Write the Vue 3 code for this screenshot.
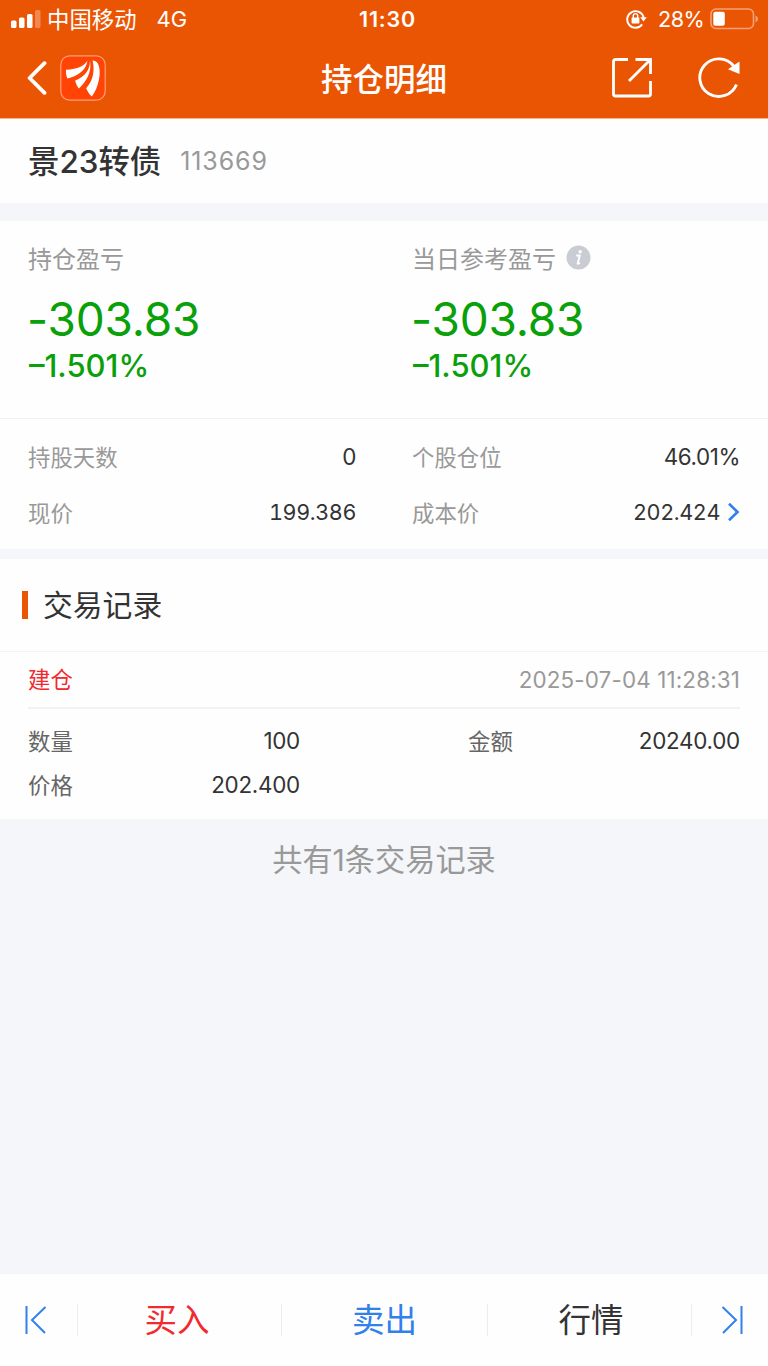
<template>
  <div class="page">
    <header class="header">
      <div class="status-bar">
        <div class="status-left">
          <svg class="signal" width="30" height="19" viewBox="0 0 30 19">
            <rect x="0" y="10.5" width="5.5" height="7.5" rx="1.6" fill="#fff" />
            <rect x="8" y="7.5" width="5.5" height="10.5" rx="1.6" fill="#fff" />
            <rect x="16" y="4" width="5.5" height="14" rx="1.6" fill="#fff" />
            <rect x="24" y="0" width="5.5" height="18" rx="1.6" fill="#fff" opacity="0.3" />
          </svg>
          <span class="carrier">中国移动</span>
          <span class="network">4G</span>
        </div>
        <span class="clock">11:30</span>
        <div class="status-right">
          <svg class="lock" width="21" height="20" viewBox="0 0 21 20">
            <path d="M16.2 15.4A8.3 8.3 0 1 1 17.6 8.6" fill="none" stroke="#fff" stroke-width="1.9" />
            <path d="M14.2 8.2h6.6l-3.3 4.4z" fill="#fff" />
            <rect x="5.6" y="8.6" width="7.8" height="6" rx="0.8" fill="#fff" />
            <path d="M7.3 9V6.8a2.2 2.2 0 0 1 4.4 0V9" fill="none" stroke="#fff" stroke-width="1.4" />
          </svg>
          <span class="percent">28%</span>
          <svg class="battery" width="49" height="22" viewBox="0 0 49 22">
            <rect x="1" y="1" width="42.5" height="19.5" rx="5" fill="none" stroke="#fff" stroke-width="1.6" opacity="0.45" />
            <rect x="3.3" y="3.8" width="11.5" height="14" rx="2" fill="#fff" />
            <path d="M45.5 7.5q2.5 1 2.5 3.4t-2.5 3.4z" fill="#fff" opacity="0.45" />
          </svg>
        </div>
      </div>

      <div class="nav-bar">
        <div class="nav-left">
          <svg class="back" width="20" height="34" viewBox="0 0 20 34">
            <path d="M17.5 2.2 2.6 17l14.9 14.8" fill="none" stroke="#fff" stroke-width="3.8" stroke-linecap="round" stroke-linejoin="round" />
          </svg>
          <svg class="logo" width="46" height="46" viewBox="0 0 46 46">
            <rect x="0.8" y="0.8" width="44.4" height="44.4" rx="9" fill="#ff4405" stroke="#ff9f78" stroke-width="1.2" />
            <path d="M27.5 5.5C24 11.5 18 14 6 14.8c-.3 3 .2 6 1.4 8.8C17 21 26 16 27.5 5.5z" fill="#fff" />
            <path d="M30 5.5C30 15 25 21.500 15.2 25.5c.6 3 1.9 5.6 3.7 8C26.5 26.5 32 17 30 5.5z" fill="#fff" />
            <path d="M32.6 5.5C35 16 33 26 26.2 33.2c1.3 3.2 3.1 6 5.6 8.4C38.5 33 42 17 38 8.8 36.6 6.5 34.8 5.6 32.6 5.5z" fill="#fff" />
          </svg>
        </div>
        <h1 class="title">持仓明细</h1>
        <div class="nav-right">
          <svg width="42" height="42" viewBox="0 0 42 42" fill="none" stroke="#fff" stroke-width="2.8">
            <path d="M17 2.5H4.5a2 2 0 0 0-2 2v32.5a2 2 0 0 0 2 2h33a2 2 0 0 0 2-2V24" />
            <path d="M24.5 2.5h15V17M38.5 3.5 18 24" />
          </svg>
          <svg width="44" height="42" viewBox="0 0 44 42">
            <path d="M39.5 27.5A19 18.8 0 1 1 36.7 9" fill="none" stroke="#fff" stroke-width="2.9" />
            <path d="M42.5 4.5v12.5L31 12.200z" fill="#fff" />
          </svg>
        </div>
      </div>
    </header>

    <section class="stock">
      <span class="stock-name">{{ stock.name }}</span>
      <span class="stock-code">{{ stock.code }}</span>
    </section>

    <section class="profit">
      <div v-for="item in profits" :key="item.label" class="profit-item">
        <div class="profit-label">
          {{ item.label }}
          <svg v-if="item.tip" class="info" width="25" height="25" viewBox="0 0 25 25">
            <circle cx="12.5" cy="12.5" r="12" fill="#c9ccd3" />
            <circle cx="14.2" cy="6.8" r="1.7" fill="#fff" />
            <path d="M10.2 10.6h3.5l-2 8q.8.3 2.3-.6" fill="none" stroke="#fff" stroke-width="2" />
          </svg>
        </div>
        <div class="profit-value">{{ item.value }}</div>
        <div class="profit-rate">{{ item.rate }}</div>
      </div>
    </section>

    <section class="detail">
      <div v-for="item in details" :key="item.label" class="detail-item">
        <span class="detail-label">{{ item.label }}</span>
        <span :class="['detail-value', { price: item.price }]">{{ item.value }}</span>
        <svg v-if="item.link" class="arrow" width="13" height="20" viewBox="0 0 13 20">
          <path d="M2 1.8 10.5 10 2 18.2" fill="none" stroke="#3280ea" stroke-width="2.6" />
        </svg>
      </div>
    </section>

    <section class="records">
      <h2 class="records-title">交易记录</h2>
      <div v-for="record in records" :key="record.time" class="record">
        <div class="record-head">
          <span class="record-type">{{ record.type }}</span>
          <span class="record-time">{{ record.time }}</span>
        </div>
        <div class="record-body">
          <div v-for="field in record.fields" :key="field.label" class="field">
            <span class="field-label">{{ field.label }}</span>
            <span class="field-value">{{ field.value }}</span>
          </div>
        </div>
      </div>
    </section>

    <p class="total">共有{{ records.length }}条交易记录</p>

    <footer class="footer">
      <div class="side">
        <svg width="22" height="30" viewBox="0 0 22 30">
          <path d="M1.5 1v28M20.5 2 7 15l13 13" fill="none" stroke="#3280ea" stroke-width="2" />
        </svg>
      </div>
      <div v-for="tab in tabs" :key="tab.text" :class="['tab', tab.type]">{{ tab.text }}</div>
      <div class="side right">
        <svg width="22" height="30" viewBox="0 0 22 30">
          <path d="M20.5 1v28M1.5 2 15 15 2 28" fill="none" stroke="#3280ea" stroke-width="2" />
        </svg>
      </div>
    </footer>
  </div>
</template>

<script setup>
import { ref } from "vue";

const stock = ref({ name: "景23转债", code: "113669" });

// 盈亏
const profits = ref([
  { label: "持仓盈亏", value: "-303.83", rate: "–1.501%" },
  { label: "当日参考盈亏", value: "-303.83", rate: "–1.501%", tip: true },
]);

// 持仓信息
const details = ref([
  { label: "持股天数", value: "0" },
  { label: "个股仓位", value: "46.01%" },
  { label: "现价", value: "199.386", price: true },
  { label: "成本价", value: "202.424", price: true, link: true },
]);

// 交易记录
const records = ref([
  {
    type: "建仓",
    time: "2025-07-04 11:28:31",
    fields: [
      { label: "数量", value: "100" },
      { label: "金额", value: "20240.00" },
      { label: "价格", value: "202.400" },
    ],
  },
]);

const tabs = [
  { text: "买入", type: "buy" },
  { text: "卖出", type: "sell" },
  { text: "行情", type: "quote" },
];
</script>

<style>
body {
  margin: 0;
  background-color: #f4f6f9;
}
</style>

<style scoped>
.page {
  display: flex;
  flex-direction: column;
  width: 768px;
  height: 1366px;
  overflow: hidden;
  background-color: #f4f6f9;
  color: #333;
  font-family: Inter, "Noto Sans CJK SC", sans-serif;
  white-space: nowrap;
}

svg {
  display: block;
  flex: none;
}

/* 顶部 */
.header {
  height: 118px;
  background-color: #ea5504;
  border-bottom: 1px solid #f6b48f;
  color: #fff;
}

.status-bar {
  display: grid;
  grid-template-columns: 1fr auto 1fr;
  align-items: center;
  height: 38px;
  padding: 0 9px 0 11px;
  line-height: 38px;
}

.status-left,
.status-right {
  display: flex;
  align-items: center;
}

.status-right {
  justify-content: flex-end;
}

.carrier {
  margin-left: 6px;
  padding-top: 2px;
  font-size: 22.4px;
  line-height: 36px;
}

.network {
  margin-left: 20px;
  font-size: 22px;
}

.clock {
  margin-left: 5px;
  font-size: 21.5px;
  font-weight: 600;
  letter-spacing: 0.8px;
}

.percent {
  margin: 0 6px 0 11px;
  font-size: 21.6px;
  letter-spacing: -0.6px;
}

.nav-bar {
  display: grid;
  grid-template-columns: 1fr auto 1fr;
  align-items: center;
  height: 80px;
  padding: 0 27px;
}

.nav-left,
.nav-right {
  display: flex;
  align-items: center;
}

.logo {
  margin-left: 13px;
}

.nav-right {
  justify-content: flex-end;
  gap: 44px;
}

.title {
  margin: 0;
  padding-top: 3px;
  font-size: 31.5px;
  font-weight: 500;
  line-height: 77px;
}

/* 名称 */
.stock {
  display: flex;
  align-items: center;
  height: 84px;
  padding: 0 28px;
  background-color: #fefefe;
}

.stock-name {
  padding-bottom: 3px;
  font-size: 31.4px;
  font-weight: 500;
}

.stock-code {
  margin-left: 19px;
  color: #999;
  font-size: 25px;
  letter-spacing: 0.9px;
}

/* 盈亏 */
.profit {
  display: flex;
  height: 197px;
  margin-top: 18px;
  padding-left: 28px;
  background-color: #fefefe;
  border-bottom: 1px solid #f0f1f3;
}

.profit-item {
  flex: none;
  width: 384px;
  padding-top: 18px;
}

.profit-label {
  display: flex;
  align-items: center;
  height: 36px;
  color: #999;
  font-size: 24px;
}

.info {
  margin-left: 10px;
}

.profit-value {
  margin: 16px 0 0 -1px;
  color: #09a009;
  font-size: 46px;
  line-height: 56px;
  letter-spacing: -0.2px;
}

.profit-rate {
  margin-left: 1px;
  color: #09a009;
  font-size: 31px;
  font-weight: 500;
  line-height: 38px;
}

/* 持仓信息 */
.detail {
  display: grid;
  grid-template-columns: 328px 328px;
  grid-auto-rows: 56px;
  column-gap: 56px;
  height: 121px;
  padding: 9px 28px 0;
  background-color: #fefefe;
}

.detail-item {
  display: flex;
  align-items: center;
}

.detail-label {
  color: #999;
  font-size: 22.4px;
}

.detail-value {
  margin-left: auto;
  font-size: 22.4px;
  letter-spacing: -0.4px;
}

.detail-value.price {
  font-size: 21.6px;
  font-variant-numeric: tabular-nums;
}

.arrow {
  margin-left: 7px;
}

/* 交易记录 */
.records {
  height: 260px;
  margin-top: 10px;
  background-color: #fefefe;
}

.records-title {
  display: flex;
  align-items: center;
  height: 92px;
  margin: 0;
  padding-left: 22px;
  border-bottom: 1px solid #f4f4f6;
  font-size: 29.8px;
  font-weight: 400;
  line-height: 92px;
}

.records-title::before {
  content: "";
  width: 6px;
  height: 28px;
  margin-right: 15px;
  background-color: #ea5504;
}

.record {
  padding: 0 28px;
}

.record-head {
  display: flex;
  align-items: center;
  justify-content: space-between;
  height: 55px;
  border-bottom: 2px solid #f2f2f4;
}

.record-type {
  padding-bottom: 3px;
  color: #f02a2d;
  font-size: 22.4px;
}

.record-time {
  color: #999;
  font-size: 22.4px;
  letter-spacing: 0.15px;
}

.record-body {
  display: grid;
  grid-template-columns: 272px 272px;
  grid-auto-rows: 44px;
  column-gap: 168px;
  padding-top: 9px;
}

.field {
  display: flex;
  align-items: center;
  justify-content: space-between;
}

.field-label {
  color: #666;
  font-size: 22.4px;
}

.field-value {
  font-size: 22.4px;
  letter-spacing: -0.25px;
}

.total {
  margin: 0;
  color: #999;
  font-size: 30.2px;
  line-height: 82px;
  text-align: center;
}

/* 底部 */
.footer {
  display: flex;
  align-items: center;
  height: 92px;
  margin-top: auto;
  background-color: #fefefe;
}

.side {
  display: flex;
  width: 77px;
  padding-left: 25px;
  box-sizing: border-box;
}

.side.right {
  width: 76px;
  padding-left: 29px;
}

.tab {
  width: 204px;
  height: 32px;
  box-sizing: border-box;
  border-left: 1px solid #ededf0;
  font-size: 32.5px;
  line-height: 33px;
  text-align: center;
}

.tab.buy {
  padding-right: 5px;
  color: #f02a2d;
}

.tab.sell {
  width: 206px;
  color: #3280ea;
}

.tab.quote {
  width: 205px;
  padding-left: 3px;
  border-right: 1px solid #ededf0;
}
</style>
